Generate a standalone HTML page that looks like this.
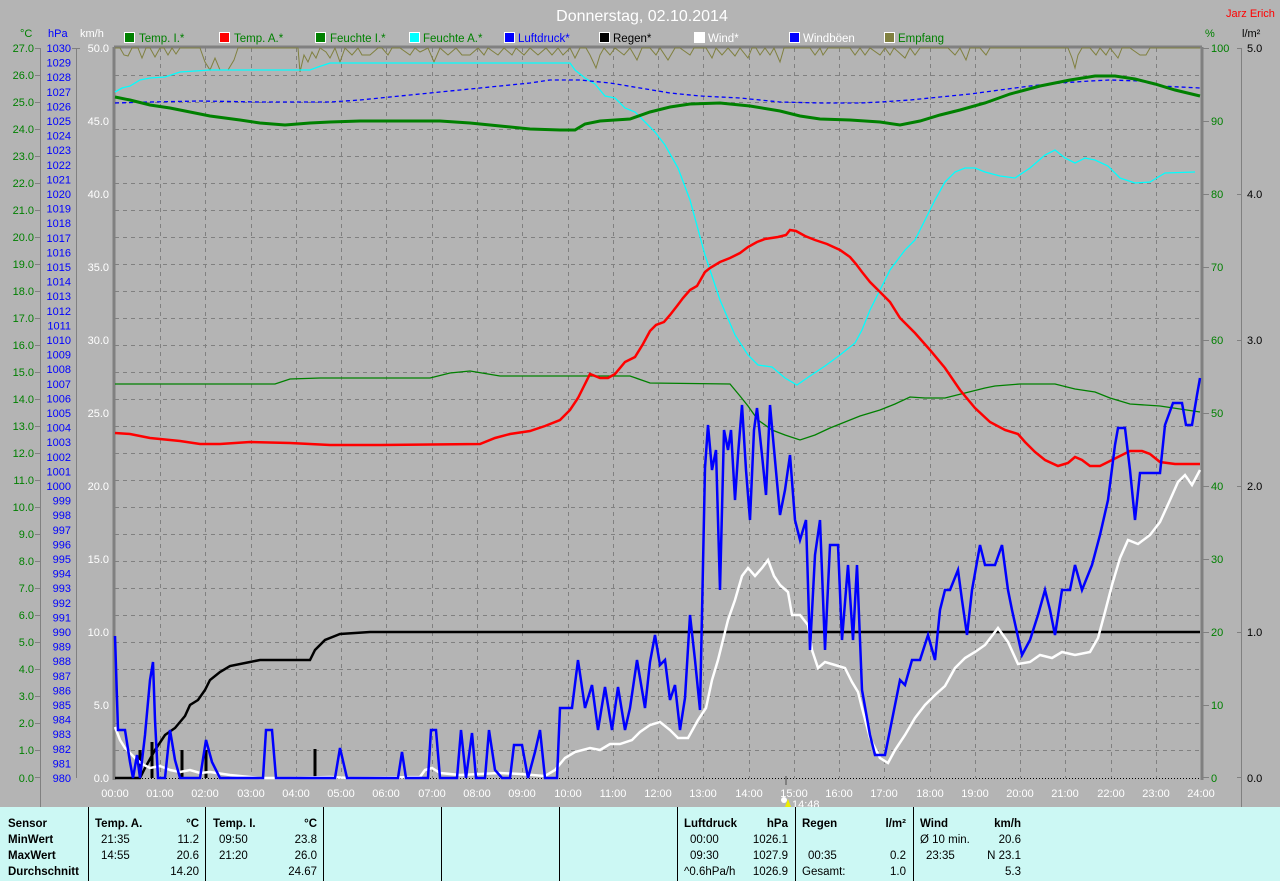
<!DOCTYPE html>
<html><head><meta charset="utf-8"><style>
html,body{margin:0;padding:0;width:1280px;height:881px;overflow:hidden;background:#b4b4b4;}
svg{display:block}
.t{font-family:"Liberation Sans",sans-serif;}
</style></head><body>
<svg width="1280" height="881" xmlns="http://www.w3.org/2000/svg" class="t">
<rect x="0" y="0" width="1280" height="881" fill="#b4b4b4"/>
<text x="642" y="21" font-size="16" fill="#fff" text-anchor="middle">Donnerstag, 02.10.2014</text>
<text x="1226" y="17" font-size="11" fill="#f00">Jarz Erich</text>
<g font-size="11.5">
<rect x="124.5" y="32.5" width="10" height="10" fill="#008000" stroke="#fff"/><text x="139" y="42" fill="#008000">Temp. I.*</text>
<rect x="219.5" y="32.5" width="10" height="10" fill="#f00" stroke="#fff"/><text x="234" y="42" fill="#008000">Temp. A.*</text>
<rect x="315.5" y="32.5" width="10" height="10" fill="#008000" stroke="#fff"/><text x="330" y="42" fill="#008000">Feuchte I.*</text>
<rect x="409.5" y="32.5" width="10" height="10" fill="#0ff" stroke="#fff"/><text x="423" y="42" fill="#008000">Feuchte A.*</text>
<rect x="504.5" y="32.5" width="10" height="10" fill="#00f" stroke="#fff"/><text x="518" y="42" fill="#00f">Luftdruck*</text>
<rect x="599.5" y="32.5" width="10" height="10" fill="#000" stroke="#fff"/><text x="613" y="42" fill="#000">Regen*</text>
<rect x="694.5" y="32.5" width="10" height="10" fill="#fff" stroke="#fff"/><text x="708" y="42" fill="#fff">Wind*</text>
<rect x="789.5" y="32.5" width="10" height="10" fill="#00f" stroke="#fff"/><text x="803" y="42" fill="#fff">Windböen</text>
<rect x="884.5" y="32.5" width="10" height="10" fill="#808040" stroke="#fff"/><text x="898" y="42" fill="#008000">Empfang</text>
</g>
<text x="20" y="37" font-size="11" fill="#008000">°C</text>
<text x="48" y="37" font-size="11" fill="#00f">hPa</text>
<text x="80" y="37" font-size="11" fill="#fff">km/h</text>
<text x="1205" y="37" font-size="11" fill="#008000">%</text>
<text x="1242" y="37" font-size="11" fill="#000">l/m²</text>
<g stroke="#808080" stroke-dasharray="4,4" stroke-width="1">
<path d="M115 75.5H1201M115 102.5H1201M115 129.5H1201M115 156.5H1201M115 183.5H1201M115 210.5H1201M115 237.5H1201M115 264.5H1201M115 291.5H1201M115 318.5H1201M115 345.5H1201M115 372.5H1201M115 399.5H1201M115 426.5H1201M115 453.5H1201M115 480.5H1201M115 507.5H1201M115 534.5H1201M115 561.5H1201M115 588.5H1201M115 615.5H1201M115 642.5H1201M115 669.5H1201M115 696.5H1201M115 723.5H1201M115 750.5H1201"/>
<path d="M160.5 48V778M205.5 48V778M251.5 48V778M296.5 48V778M341.5 48V778M386.5 48V778M432.5 48V778M477.5 48V778M522.5 48V778M568.5 48V778M613.5 48V778M658.5 48V778M703.5 48V778M749.5 48V778M794.5 48V778M839.5 48V778M884.5 48V778M930.5 48V778M975.5 48V778M1020.5 48V778M1065.5 48V778M1111.5 48V778M1156.5 48V778"/>
</g>
<line x1="115" y1="778.5" x2="1201" y2="778.5" stroke="#000" stroke-dasharray="1,2"/>
<g stroke="#808080">
<line x1="114" y1="47" x2="114" y2="780" stroke-width="3"/>
<line x1="40.5" y1="48" x2="40.5" y2="808"/>
<line x1="1202" y1="47" x2="1202" y2="780" stroke-width="3"/>
<line x1="1241.5" y1="48" x2="1241.5" y2="808"/>
<line x1="114" y1="47" x2="1202" y2="47" stroke-width="3"/>
</g>
<g font-size="11" fill="#008000" text-anchor="end">
<text x="34" y="52">27.0</text><text x="34" y="79">26.0</text><text x="34" y="106">25.0</text><text x="34" y="133">24.0</text><text x="34" y="160">23.0</text><text x="34" y="187">22.0</text><text x="34" y="214">21.0</text><text x="34" y="241">20.0</text><text x="34" y="268">19.0</text><text x="34" y="295">18.0</text><text x="34" y="322">17.0</text><text x="34" y="349">16.0</text><text x="34" y="376">15.0</text><text x="34" y="403">14.0</text><text x="34" y="430">13.0</text><text x="34" y="457">12.0</text><text x="34" y="484">11.0</text><text x="34" y="511">10.0</text><text x="34" y="538">9.0</text><text x="34" y="565">8.0</text><text x="34" y="592">7.0</text><text x="34" y="619">6.0</text><text x="34" y="646">5.0</text><text x="34" y="673">4.0</text><text x="34" y="700">3.0</text><text x="34" y="727">2.0</text><text x="34" y="754">1.0</text><text x="34" y="782">0.0</text>
</g>
<g stroke="#808080"><path d="M35 48.5h6M35 75.5h6M35 102.5h6M35 129.5h6M35 156.5h6M35 183.5h6M35 210.5h6M35 237.5h6M35 264.5h6M35 291.5h6M35 318.5h6M35 345.5h6M35 372.5h6M35 399.5h6M35 426.5h6M35 453.5h6M35 480.5h6M35 507.5h6M35 534.5h6M35 561.5h6M35 588.5h6M35 615.5h6M35 642.5h6M35 669.5h6M35 696.5h6M35 723.5h6M35 750.5h6M35 777.5h6"/></g>
<g font-size="11" fill="#00f" text-anchor="end">
<text x="71" y="52">1030</text><text x="71" y="66.6">1029</text><text x="71" y="81.2">1028</text><text x="71" y="95.8">1027</text><text x="71" y="110.4">1026</text><text x="71" y="125">1025</text><text x="71" y="139.6">1024</text><text x="71" y="154.2">1023</text><text x="71" y="168.8">1022</text><text x="71" y="183.4">1021</text><text x="71" y="198">1020</text><text x="71" y="212.6">1019</text><text x="71" y="227.2">1018</text><text x="71" y="241.8">1017</text><text x="71" y="256.4">1016</text><text x="71" y="271">1015</text><text x="71" y="285.6">1014</text><text x="71" y="300.2">1013</text><text x="71" y="314.8">1012</text><text x="71" y="329.4">1011</text><text x="71" y="344">1010</text><text x="71" y="358.6">1009</text><text x="71" y="373.2">1008</text><text x="71" y="387.8">1007</text><text x="71" y="402.4">1006</text><text x="71" y="417">1005</text><text x="71" y="431.6">1004</text><text x="71" y="446.2">1003</text><text x="71" y="460.8">1002</text><text x="71" y="475.4">1001</text><text x="71" y="490">1000</text><text x="71" y="504.6">999</text><text x="71" y="519.2">998</text><text x="71" y="533.8">997</text><text x="71" y="548.4">996</text><text x="71" y="563">995</text><text x="71" y="577.6">994</text><text x="71" y="592.2">993</text><text x="71" y="606.8">992</text><text x="71" y="621.4">991</text><text x="71" y="636">990</text><text x="71" y="650.6">989</text><text x="71" y="665.2">988</text><text x="71" y="679.8">987</text><text x="71" y="694.4">986</text><text x="71" y="709">985</text><text x="71" y="723.6">984</text><text x="71" y="738.2">983</text><text x="71" y="752.8">982</text><text x="71" y="767.4">981</text><text x="71" y="782">980</text>
</g>
<line x1="72" y1="48.5" x2="80" y2="48.5" stroke="#808080"/>
<line x1="76.5" y1="48" x2="76.5" y2="778" stroke="#808080"/>
<g font-size="11" fill="#fff" text-anchor="end">
<text x="109" y="52">50.0</text><text x="109" y="125">45.0</text><text x="109" y="198">40.0</text><text x="109" y="271">35.0</text><text x="109" y="344">30.0</text><text x="109" y="417">25.0</text><text x="109" y="490">20.0</text><text x="109" y="563">15.0</text><text x="109" y="636">10.0</text><text x="109" y="709">5.0</text><text x="109" y="782">0.0</text>
</g>
<g font-size="11" fill="#008000"><text x="1211" y="52">100</text><text x="1211" y="125">90</text><text x="1211" y="198">80</text><text x="1211" y="271">70</text><text x="1211" y="344">60</text><text x="1211" y="417">50</text><text x="1211" y="490">40</text><text x="1211" y="563">30</text><text x="1211" y="636">20</text><text x="1211" y="709">10</text><text x="1211" y="782">0</text></g>
<g stroke="#808080"><path d="M1203 48.5h6M1203 121.5h6M1203 194.5h6M1203 267.5h6M1203 340.5h6M1203 413.5h6M1203 486.5h6M1203 559.5h6M1203 632.5h6M1203 705.5h6M1203 777.5h6M1237 48.5h5M1237 194.5h5M1237 340.5h5M1237 486.5h5M1237 632.5h5M1237 777.5h5"/></g>
<g font-size="11" fill="#000"><text x="1247" y="52">5.0</text><text x="1247" y="198">4.0</text><text x="1247" y="344">3.0</text><text x="1247" y="490">2.0</text><text x="1247" y="636">1.0</text><text x="1247" y="782">0.0</text></g>
<g font-size="11" fill="#fff" text-anchor="middle">
<text x="115" y="797">00:00</text><text x="160" y="797">01:00</text><text x="205" y="797">02:00</text><text x="251" y="797">03:00</text><text x="296" y="797">04:00</text><text x="341" y="797">05:00</text><text x="386" y="797">06:00</text><text x="432" y="797">07:00</text><text x="477" y="797">08:00</text><text x="522" y="797">09:00</text><text x="568" y="797">10:00</text><text x="613" y="797">11:00</text><text x="658" y="797">12:00</text><text x="703" y="797">13:00</text><text x="749" y="797">14:00</text><text x="794" y="797">15:00</text><text x="839" y="797">16:00</text><text x="884" y="797">17:00</text><text x="930" y="797">18:00</text><text x="975" y="797">19:00</text><text x="1020" y="797">20:00</text><text x="1065" y="797">21:00</text><text x="1111" y="797">22:00</text><text x="1156" y="797">23:00</text><text x="1201" y="797">24:00</text>
</g>
<line x1="786" y1="776" x2="786" y2="785" stroke="#808080" stroke-width="2"/>
<circle cx="784" cy="800" r="3" fill="#fff"/>
<path d="M785 807 L788 799 L791 807Z" fill="#ee0"/>
<text x="792" y="808" font-size="11" fill="#fff">14:48</text>
<polyline fill="none" stroke="#808040" stroke-width="1" points="115,48 120,48 124,55 128,56 132,48 138,48 142,58 146,48 150,48 155,57 160,48 164,48 168,55 172,48 176,54 180,48 190,48 200,48 205,62 210,70 215,58 220,70 228,70 234,60 238,48 245,48 270,48 290,48 298,48 300,72 304,55 308,62 312,52 316,58 320,48 326,52 330,58 335,48 340,62 345,48 352,55 358,48 362,55 370,55 378,48 382,48 388,55 392,48 400,48 410,55 415,48 420,52 428,48 434,62 440,48 448,55 456,48 462,55 470,55 478,48 484,55 488,48 498,55 504,48 512,55 516,48 524,55 530,48 538,55 546,48 552,55 558,48 563,55 570,48 575,58 580,48 586,48 590,55 596,68 600,55 604,48 610,55 615,48 624,55 630,48 637,60 642,48 650,48 656,55 660,48 668,60 675,48 680,48 690,55 694,48 706,48 712,58 716,48 722,55 728,48 735,56 740,48 748,58 752,48 756,48 760,55 765,48 770,55 774,48 780,62 784,48 792,48 800,48 810,48 815,55 820,48 823,55 828,48 850,48 855,55 860,48 865,55 870,48 880,55 885,48 890,55 894,48 905,58 910,48 915,55 920,48 948,48 955,55 960,48 966,60 970,48 980,48 986,55 990,48 1020,48 1068,48 1072,58 1075,68 1078,55 1082,48 1090,48 1096,55 1100,48 1106,55 1110,48 1118,58 1122,48 1130,48 1140,55 1146,55 1150,48 1160,48 1180,48 1192,48 1200,48"/>
<polyline fill="none" stroke="#0ff" stroke-width="1.3" points="115,92 122,88 130,86 140,80 150,78 165,77 180,72 195,71 210,70 310,70 318,67 330,63 345,63 570,63 575,70 585,78 595,84 605,96 615,98 625,108 635,112 645,122 655,132 665,145 678,168 690,200 705,255 720,300 735,335 748,355 758,365 772,367 785,378 797,385 810,376 825,366 840,355 855,343 862,330 870,310 880,290 890,270 905,250 915,240 925,220 935,200 945,182 955,172 965,168 975,168 985,172 1000,176 1015,178 1030,168 1045,155 1055,150 1065,158 1075,163 1085,158 1095,160 1108,166 1120,178 1135,183 1150,182 1165,173 1195,172"/>
<polyline fill="none" stroke="#008000" stroke-width="1.3" points="115,384 275,384 290,379 320,378 430,378 450,373 470,371 500,376 560,376 630,376 650,383 730,384 740,396 748,406 758,420 772,430 785,435 800,440 815,435 830,428 845,422 860,416 880,410 895,404 910,397 925,398 945,398 965,393 985,388 995,386 1020,384 1055,384 1075,389 1095,392 1110,398 1130,404 1160,406 1200,412"/>
<polyline fill="none" stroke="#00f" stroke-width="1.3" stroke-dasharray="4,3" points="115,103 150,102 200,101 260,102 290,102 330,102 360,100 380,98 410,95 440,92 470,89 500,86 530,83 550,80 580,80 610,83 640,88 670,93 700,96 740,98 780,102 820,103 860,103 880,102 910,100 940,97 970,94 1000,90 1030,86 1060,83 1090,81 1110,80 1140,81 1160,86 1200,88"/>
<polyline fill="none" stroke="#008000" stroke-width="3" points="115,97 130,100 150,105 170,108 190,112 210,116 240,120 260,123 285,125 310,123 330,122 360,121 440,121 470,123 500,126 530,129 560,130 575,130 585,124 600,121 630,119 650,112 670,107 690,104 720,103 750,106 780,111 800,116 820,119 850,120 880,122 900,125 920,121 940,115 960,110 985,103 1010,94 1040,86 1070,80 1095,76 1115,76 1135,79 1155,84 1175,90 1200,96"/>
<polyline fill="none" stroke="#f00" stroke-width="2.5" points="115,433 130,434 150,438 180,441 200,444 220,444 250,442 290,443 330,445 380,445 480,444 495,438 510,434 530,431 545,426 560,420 570,410 578,398 584,386 590,374 600,378 608,378 615,374 625,362 635,357 643,344 650,331 656,325 664,322 670,315 677,306 683,298 690,290 697,286 705,272 710,268 720,262 730,258 740,253 748,247 757,242 765,239 778,237 786,235 790,230 796,231 805,236 815,240 827,244 840,250 850,257 856,264 862,272 870,282 880,292 890,302 900,318 915,333 930,350 945,368 960,390 975,408 990,422 1005,430 1018,434 1025,442 1035,452 1045,460 1058,466 1068,463 1075,457 1082,460 1090,466 1100,466 1110,461 1120,456 1130,451 1142,451 1150,454 1160,462 1175,464 1200,464"/>
<polyline fill="none" stroke="#000" stroke-width="2.5" points="115,778 140,778 145,768 155,750 165,735 175,728 180,722 185,716 190,705 198,700 205,690 210,680 220,672 230,666 250,662 260,660 310,660 315,650 325,640 340,634 370,632 1200,632"/>
<g stroke="#000" stroke-width="3"><path d="M140 778V750M152 778V742M182 778V750M206 778V750M315 778V749"/></g>
<polyline fill="none" stroke="#fff" stroke-width="2.5" points="115,727 120,740 125,748 135,758 142,764 150,768 160,766 170,770 180,772 190,770 200,773 210,772 230,775 260,778 290,778 330,777 350,778 420,777 425,770 432,768 440,773 460,775 500,773 520,774 545,776 555,770 565,758 575,752 590,748 600,750 610,744 620,744 632,740 640,732 650,725 660,722 670,730 678,738 688,738 698,720 706,708 712,680 718,660 728,620 735,600 742,576 748,568 755,576 762,568 768,560 774,576 780,585 788,592 792,615 800,615 808,625 812,650 818,668 825,662 835,665 845,668 852,682 858,692 862,708 870,738 880,758 888,763 895,750 905,735 915,718 925,705 935,695 945,686 955,668 965,658 975,652 985,645 998,628 1008,642 1018,664 1030,662 1040,655 1052,658 1062,652 1075,655 1090,652 1098,638 1105,612 1112,585 1120,558 1128,540 1138,544 1150,535 1160,522 1170,500 1178,482 1185,475 1192,485 1200,470"/>
<polyline fill="none" stroke="#00f" stroke-width="2.5" points="115,636 118,730 125,730 130,762 133,778 137,755 140,778 145,735 150,680 153,662 155,720 158,778 165,778 170,730 175,760 180,778 200,778 206,740 212,762 220,778 263,778 266,730 272,730 276,778 335,778 340,748 347,778 398,778 402,752 406,778 428,778 431,730 436,730 440,778 457,778 461,730 466,778 472,733 476,778 485,778 489,730 495,770 502,778 510,778 514,745 522,745 528,778 535,752 540,730 545,778 557,778 560,708 572,708 578,660 585,708 592,685 598,730 605,687 612,730 618,687 625,730 630,708 637,660 645,708 650,662 655,635 660,665 665,660 670,700 675,685 680,730 685,698 690,615 695,660 700,710 705,468 708,425 712,470 716,450 720,590 724,430 728,450 731,430 735,500 738,455 742,405 746,470 750,520 754,430 757,408 762,455 766,495 770,405 775,460 780,515 785,490 790,455 795,520 800,540 806,520 810,650 815,555 820,520 825,650 830,545 838,545 842,640 848,565 853,640 857,565 862,690 870,735 875,755 885,755 890,730 895,705 900,680 905,685 912,660 920,660 928,635 935,660 940,610 945,590 950,590 958,570 962,600 967,635 972,590 980,545 985,565 995,565 1002,545 1008,590 1012,610 1022,655 1030,640 1038,615 1045,590 1050,610 1055,635 1062,590 1070,590 1075,565 1082,590 1092,565 1100,535 1108,500 1115,445 1118,428 1125,428 1130,470 1135,520 1140,473 1150,473 1160,473 1165,425 1173,403 1182,403 1186,425 1192,425 1197,395 1200,378"/>
<rect x="0" y="807" width="1280" height="74" fill="#ccf8f4"/>
<g stroke="#000"><path d="M88.5 807V881M205.5 807V881M323.5 807V881M441.5 807V881M559.5 807V881M677.5 807V881M795.5 807V881M913.5 807V881"/></g>
<g font-size="11.5">
<g font-weight="bold"><text x="8" y="827">Sensor</text><text x="8" y="843">MinWert</text><text x="8" y="859">MaxWert</text><text x="8" y="875">Durchschnitt</text>
<text x="95" y="827">Temp. A.</text><text x="199" y="827" text-anchor="end">°C</text>
<text x="213" y="827">Temp. I.</text><text x="317" y="827" text-anchor="end">°C</text>
<text x="684" y="827">Luftdruck</text><text x="788" y="827" text-anchor="end">hPa</text>
<text x="802" y="827">Regen</text><text x="906" y="827" text-anchor="end">l/m²</text>
<text x="920" y="827">Wind</text><text x="1021" y="827" text-anchor="end">km/h</text></g>
<text x="101" y="843">21:35</text><text x="199" y="843" text-anchor="end">11.2</text>
<text x="101" y="859">14:55</text><text x="199" y="859" text-anchor="end">20.6</text>
<text x="199" y="875" text-anchor="end">14.20</text>
<text x="219" y="843">09:50</text><text x="317" y="843" text-anchor="end">23.8</text>
<text x="219" y="859">21:20</text><text x="317" y="859" text-anchor="end">26.0</text>
<text x="317" y="875" text-anchor="end">24.67</text>
<text x="690" y="843">00:00</text><text x="788" y="843" text-anchor="end">1026.1</text>
<text x="690" y="859">09:30</text><text x="788" y="859" text-anchor="end">1027.9</text>
<text x="684" y="875">^0.6hPa/h</text><text x="788" y="875" text-anchor="end">1026.9</text>
<text x="808" y="859">00:35</text><text x="906" y="859" text-anchor="end">0.2</text>
<text x="802" y="875">Gesamt:</text><text x="906" y="875" text-anchor="end">1.0</text>
<text x="920" y="843">Ø 10 min.</text><text x="1021" y="843" text-anchor="end">20.6</text>
<text x="926" y="859">23:35</text><text x="1021" y="859" text-anchor="end">N 23.1</text>
<text x="1021" y="875" text-anchor="end">5.3</text>
</g>
</svg>
</body></html>
